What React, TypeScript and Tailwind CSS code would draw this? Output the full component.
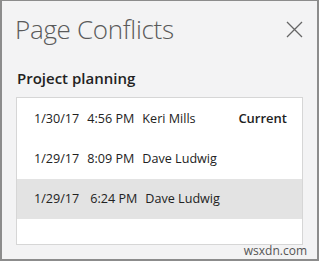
import React from 'react';

const rows = [
  { date: '1/30/17', time: '4:56 PM', name: 'Keri Mills', current: true },
  { date: '1/29/17', time: '8:09 PM', name: 'Dave Ludwig', current: false },
  { date: '1/29/17', time: '6:24 PM', name: 'Dave Ludwig', current: false, selected: true },
];

export default function App() {
  return (
    <div
      className="relative w-[319px] h-[261px] bg-[#f3f3f4] border-t border-l-2 border-r-2 border-b-2 border-[#8c8c8c] overflow-hidden"
      style={{ fontFamily: '"Open Sans", "Noto Sans", sans-serif' }}
    >
      <div className="flex items-start justify-between pl-[13px] pr-[14px] pt-[10px]">
        <h1 className="text-[26px] font-light text-[#5a5a5a] leading-[36px] tracking-[-0.3px]">Page Conflicts</h1>
        <svg width="17" height="17" viewBox="0 0 17 17" className="mt-[10px]">
          <path d="M1 1 L16 16 M16 1 L1 16" stroke="#666" strokeWidth="1.3" />
        </svg>
      </div>
      <div className="pl-[15px] pt-[21px] text-[15px] font-semibold text-[#222] leading-[20px]">Project planning</div>
      <div className="mx-[14px] mt-[9px] h-[148px] bg-white border border-[#d6d6d6] pt-[1px]">
        {rows.map((r, i) => (
          <div
            key={i}
            className={`flex items-center h-[40px] pl-[17px] pr-[15px] text-[12.6px] text-[#222] ${r.selected ? 'bg-[#e3e3e3]' : ''}`}
          >
            <span>{r.date}</span>
            <span className={r.selected ? 'ml-[11px]' : 'ml-[8px]'}>{r.time}</span>
            <span className="ml-[8px]">{r.name}</span>
            {r.current && <span className="ml-auto font-semibold text-[13px]">Current</span>}
          </div>
        ))}
      </div>
      <div className="absolute right-[10px] bottom-[1px] text-[12px] text-[#555] leading-[14px]">wsxdn.com</div>
    </div>
  );
}
